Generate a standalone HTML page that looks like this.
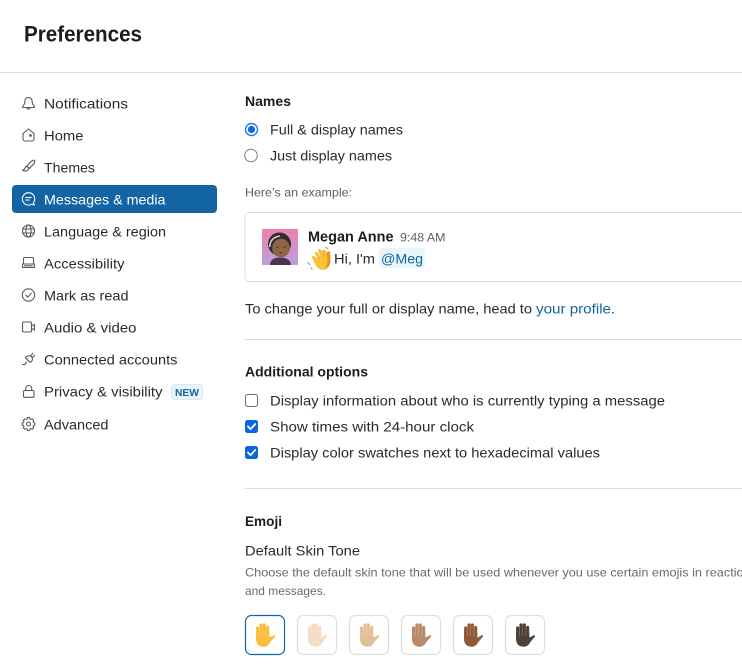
<!DOCTYPE html>
<html lang="en">
<head>
<meta charset="utf-8">
<title>Preferences</title>
<style>
html,body{margin:0;padding:0;background:#fff;width:742px;height:666px;overflow:hidden}
svg{display:block}
text{font-family:"Liberation Sans",sans-serif;fill:#1d1c1d}
.n{font-size:14px;fill:#2c2a2c}
.t{font-size:14px;fill:#2c2a2c}
.b{font-size:14px;font-weight:700;fill:#1d1c1d}
.g{font-size:12px;fill:#6b6a6b}
.i{fill:none;stroke:#5a585a;stroke-width:1.1;stroke-linecap:round;stroke-linejoin:round}
.hand .f{fill:none;stroke:currentColor;stroke-width:3.3;stroke-linecap:round}
.hand .p{fill:currentColor}
.hand .s{fill:none;stroke:#fff;stroke-opacity:.4;stroke-width:.5}
.btn{fill:#fff;stroke:#dddddd;stroke-width:1.2}
</style>
</head>
<body>
<svg width="742" height="666" viewBox="0 0 742 666" xmlns="http://www.w3.org/2000/svg">
<defs>
<linearGradient id="av" x1="0" y1="0" x2="0" y2="1"><stop offset="0" stop-color="#ee82ac"/><stop offset="1" stop-color="#b9a0de"/></linearGradient>
<g id="hand" class="hand">
<path class="f" d="M12.700 13V21M16 10V20M19.300 10V20M22.600 12.500V21"/>
<path class="p" d="M11 18H24.300V22.600L28.500 20.400C30.200 19.800 30.600 21.200 29.400 22.200L25 27.500C23.600 30.400 21.500 31.700 18.400 31.700C13.600 31.700 11 28.600 11 24Z"/>
<path class="s" d="M14.350 10V21M17.650 9V21M20.950 10V21"/>
</g>
</defs>

<rect width="742" height="666" fill="#fff"/>
<text x="24" y="41.500" textLength="118" lengthAdjust="spacingAndGlyphs" style="font-size:22px;font-weight:700;fill:#1d1c1d">Preferences</text>
<rect x="0" y="72" width="742" height="1" fill="#dddddd"/>

<!-- Sidebar -->
<rect x="12" y="185" width="205" height="28" rx="4" fill="#1264a3"/>
<g>
<text class="n" x="44" y="108.500" textLength="84" lengthAdjust="spacingAndGlyphs">Notifications</text>
<text class="n" x="44" y="140.500" textLength="39.500" lengthAdjust="spacingAndGlyphs">Home</text>
<text class="n" x="44" y="172.500" textLength="51" lengthAdjust="spacingAndGlyphs">Themes</text>
<text class="n" x="44" y="204.500" textLength="121.500" lengthAdjust="spacingAndGlyphs" style="fill:#fff">Messages &amp; media</text>
<text class="n" x="44" y="236.500" textLength="122" lengthAdjust="spacingAndGlyphs">Language &amp; region</text>
<text class="n" x="44" y="268.500" textLength="80.500" lengthAdjust="spacingAndGlyphs">Accessibility</text>
<text class="n" x="44" y="300.500" textLength="84.500" lengthAdjust="spacingAndGlyphs">Mark as read</text>
<text class="n" x="44" y="332.500" textLength="92.500" lengthAdjust="spacingAndGlyphs">Audio &amp; video</text>
<text class="n" x="44" y="364.500" textLength="133.500" lengthAdjust="spacingAndGlyphs">Connected accounts</text>
<text class="n" x="44" y="396.500" textLength="118.500" lengthAdjust="spacingAndGlyphs">Privacy &amp; visibility</text>
<text class="n" x="44" y="429.500" textLength="64.500" lengthAdjust="spacingAndGlyphs">Advanced</text>
</g>
<rect x="171.500" y="384.500" width="31" height="15" rx="3.500" fill="#e8f5fa" stroke="#d5e9f3"/>
<text x="175" y="396" textLength="24" lengthAdjust="spacingAndGlyphs" style="font-size:10.500px;font-weight:700;fill:#1264a3">NEW</text>

<!-- Sidebar icons -->
<g class="i">
<path d="M28.500 97.500c-2.600 0-3.700 2-3.700 4.300 0 2.300-1 3.500-2.200 4.700 -.3.500 0 1 .5 1h10.800c.5 0 .8-.5.500-1 -1.200-1.200-2.200-2.400-2.200-4.700 0-2.300-1.100-4.300-3.700-4.300zM26.800 107.500c.2 1 .9 1.600 1.700 1.600s1.500-.6 1.700-1.600"/>
<path d="M23 133.500l5.500-4.500 5.500 4.500v5.500a2 2 0 0 1-2 2h-7a2 2 0 0 1-2-2z"/>
<circle cx="30.500" cy="135.500" r=".8" fill="#5a585a"/>
<path d="M34.500 160.500c-.9-.8-2.800.4-4.500 2l-3.400 3.700 2.500 2.400 3.500-3.400c1.700-1.600 2.700-3.800 1.900-4.700zM26.600 166.200c-1.700.5-1.400 2.300-2.300 3.100-.4.400-1.100.7-1.700.9 1.700 1.200 4 1.100 5.400-.2.800-.9.900-1.700.7-2.200z"/>
<path style="stroke:#fff" d="M28.500 192.700a6.200 6.200 0 1 0 3.300 11.500l2.500.8-.8-2.400a6.200 6.200 0 0 0-5-9.900zM25.800 197.500h5.400M25.800 200h3.600"/>
<circle cx="28.500" cy="231" r="6"/><ellipse cx="28.500" cy="231" rx="2.600" ry="6"/><path d="M22.700 229h11.600M22.700 233h11.600"/>
<path d="M23.500 258.500a1 1 0 0 1 1-1h8a1 1 0 0 1 1 1v5.500h-10zM22.500 264h12v3.500h-12zM24.500 265.800h8"/>
<circle cx="28.500" cy="295" r="6.200"/><path d="M25.800 295.200l2 2 3.500-4"/>
<rect x="22.500" y="322" width="9" height="10" rx="1.500"/><path d="M31.500 326l3-1.700v5.800l-3-1.800"/>
<path d="M22.500 364.500c1.800.6 2.800-.2 3.500-1.500M25.500 357.800l4.500 4.500c1.400-.5 2.500-1.900 2.500-3.400 0-.9-.3-1.600-.9-2.200-.6-.6-1.300-.9-2.200-.9-1.500 0-3.200.8-3.900 2zM30.500 355.900l2.300-2.400M32.300 357.700l2.300-2.400M26.500 362l-1 1"/>
<rect x="23.500" y="390.500" width="10.500" height="6.800" rx="1.200"/><path d="M25.700 390.500v-2a3 3 0 0 1 6 0v2"/>
<path style="stroke-width:1.350" transform="translate(5.700 82.800) scale(.8)" d="M27.200 418.500h2.600l.4 1.600 1.500.7 1.500-.8 1.800 1.800-.8 1.500.6 1.500 1.600.5v2.500l-1.600.5-.6 1.500.8 1.500-1.800 1.800-1.500-.8-1.500.6-.4 1.600h-2.600l-.4-1.600-1.500-.6-1.500.8-1.800-1.800.8-1.500-.6-1.500-1.600-.5v-2.500l1.600-.5.600-1.500-.8-1.500 1.800-1.800 1.500.8 1.500-.7z"/>
<circle cx="28.500" cy="424" r="2"/>
</g>

<!-- Names -->
<text class="b" x="245" y="106" textLength="46" lengthAdjust="spacingAndGlyphs">Names</text>
<circle cx="251.500" cy="129.500" r="6.700" fill="#1d7cf2"/>
<circle cx="251.500" cy="129.500" r="5.300" fill="#fff"/>
<circle cx="251.500" cy="129.500" r="3.600" fill="#0b66e4"/>
<text class="t" x="270" y="134.500" textLength="133" lengthAdjust="spacingAndGlyphs">Full &amp; display names</text>
<circle cx="251" cy="155.500" r="6.300" fill="#fff" stroke="#7c7b7c" stroke-width="1"/>
<text class="t" x="270" y="160.500" textLength="122" lengthAdjust="spacingAndGlyphs">Just display names</text>

<text class="g" x="245" y="196.500" textLength="107" lengthAdjust="spacingAndGlyphs" style="fill:#616061;font-size:12px">Here’s an example:</text>

<rect x="245" y="212.500" width="520" height="69" rx="4" fill="#fff" stroke="#dddddd"/>

<!-- Avatar -->
<rect x="262" y="229" width="36" height="36" fill="url(#av)"/>
<path d="M270 265c0-5 4-7.500 10-7.500s11 2.500 11 7.500z" fill="#4a3550"/>
<circle cx="279.500" cy="244" r="11.500" fill="#2f2b2e"/>
<ellipse cx="281" cy="248" rx="8.800" ry="9.300" fill="#8f6547"/>
<path d="M269.800 247c0-7 4-10 10-11" fill="none" stroke="#d9d6d6" stroke-width="1.500"/>
<path d="M276 247h3M283.500 247h3M279.500 252.500h3" stroke="#523622" stroke-width="1" fill="none"/>

<text x="308" y="241.500" textLength="85.500" lengthAdjust="spacingAndGlyphs" style="font-size:15px;font-weight:700;fill:#1d1c1d">Megan Anne</text>
<text x="400" y="241.500" textLength="45.500" lengthAdjust="spacingAndGlyphs" style="font-size:12px;fill:#616061">9:48 AM</text>

<!-- Wave emoji -->
<g transform="translate(307 247)">
<path d="M6.500 10.500L10 15M9.500 6.500L14.500 12.500M12.500 3.500L17.500 10.500M17 4L20.500 10" stroke="#f9c23c" stroke-width="3.200" stroke-linecap="round" fill="none"/>
<path d="M6 13L11 10L18 9L19.500 6.500C20.500 4 22.500 3.500 23 5.500L23.500 12C24 17 21.500 21 18 22.500C14 23.700 10.500 21.500 8.500 18Z" fill="#f9c23c"/>
<path d="M19.500 6.500C20.500 4 22.500 3.500 23 5.500L23.500 12C24 17 21.500 21 18 22.500C20.500 18 21 12 19.500 6.500Z" fill="#e8991d"/>
<path d="M9 8L13 13M12 5L16 11M15.500 4L18.500 10" stroke="#e8991d" stroke-width=".6" fill="none"/>
<path d="M.5 15L3 18M3.500 20.500L5.500 22.500M18 .5L21 1.500" stroke="#9a9a9a" stroke-width="1" fill="none"/>
</g>

<text class="t" x="334" y="263.500" textLength="41" lengthAdjust="spacingAndGlyphs">Hi, I'm</text>
<rect x="379" y="248" width="46" height="20" rx="3" fill="#e8f5fa"/>
<text class="t" x="381" y="263.500" textLength="42" lengthAdjust="spacingAndGlyphs" style="fill:#1264a3">@Meg</text>

<text class="t" x="245" y="313.500" textLength="287" lengthAdjust="spacingAndGlyphs">To change your full or display name, head to</text>
<text class="t" x="536" y="313.500" textLength="75" lengthAdjust="spacingAndGlyphs" style="fill:#1264a3">your profile</text>
<text class="t" x="611" y="313.500">.</text>

<rect x="245" y="339" width="497" height="1" fill="#dddddd"/>

<!-- Additional options -->
<text class="b" x="245" y="376.500" textLength="123" lengthAdjust="spacingAndGlyphs">Additional options</text>
<rect x="245.500" y="394.500" width="12" height="12" rx="2.200" fill="#fff" stroke="#6f6e6f"/>
<text class="t" x="270" y="405.500" textLength="395" lengthAdjust="spacingAndGlyphs">Display information about who is currently typing a message</text>
<rect x="245" y="420" width="13" height="13" rx="2.500" fill="#0b66e4"/>
<path d="M248 426.500l2.500 2.700 4.700-5.200" fill="none" stroke="#fff" stroke-width="1.800" stroke-linecap="round" stroke-linejoin="round"/>
<text class="t" x="270" y="431.500" textLength="204" lengthAdjust="spacingAndGlyphs">Show times with 24-hour clock</text>
<rect x="245" y="446" width="13" height="13" rx="2.500" fill="#0b66e4"/>
<path d="M248 452.500l2.500 2.700 4.700-5.200" fill="none" stroke="#fff" stroke-width="1.800" stroke-linecap="round" stroke-linejoin="round"/>
<text class="t" x="270" y="457.500" textLength="330" lengthAdjust="spacingAndGlyphs">Display color swatches next to hexadecimal values</text>

<rect x="245" y="488" width="497" height="1" fill="#dddddd"/>

<!-- Emoji -->
<text class="b" x="245" y="526" textLength="37" lengthAdjust="spacingAndGlyphs">Emoji</text>
<text class="t" x="245" y="555.500" textLength="115" lengthAdjust="spacingAndGlyphs">Default Skin Tone</text>
<text class="g" x="245" y="576.500" textLength="512" lengthAdjust="spacingAndGlyphs">Choose the default skin tone that will be used whenever you use certain emojis in reactions</text>
<text class="g" x="245" y="595" textLength="81" lengthAdjust="spacingAndGlyphs">and messages.</text>

<rect x="245.500" y="615.500" width="39" height="39" rx="6" fill="#fff" stroke="#1264a3" stroke-width="1.200"/>
<rect class="btn" x="297.500" y="615.500" width="39" height="39" rx="6"/>
<rect class="btn" x="349.500" y="615.500" width="39" height="39" rx="6"/>
<rect class="btn" x="401.500" y="615.500" width="39" height="39" rx="6"/>
<rect class="btn" x="453.500" y="615.500" width="39" height="39" rx="6"/>
<rect class="btn" x="505.500" y="615.500" width="39" height="39" rx="6"/>
<use href="#hand" x="245" y="615" style="color:#f8bd3e"/>
<use href="#hand" x="297" y="615" style="color:#f5dcc5"/>
<use href="#hand" x="349" y="615" style="color:#e3bf98"/>
<use href="#hand" x="401" y="615" style="color:#b98a66"/>
<use href="#hand" x="453" y="615" style="color:#8d5a35"/>
<use href="#hand" x="505" y="615" style="color:#4d4038"/>
</svg>
</body>
</html>
